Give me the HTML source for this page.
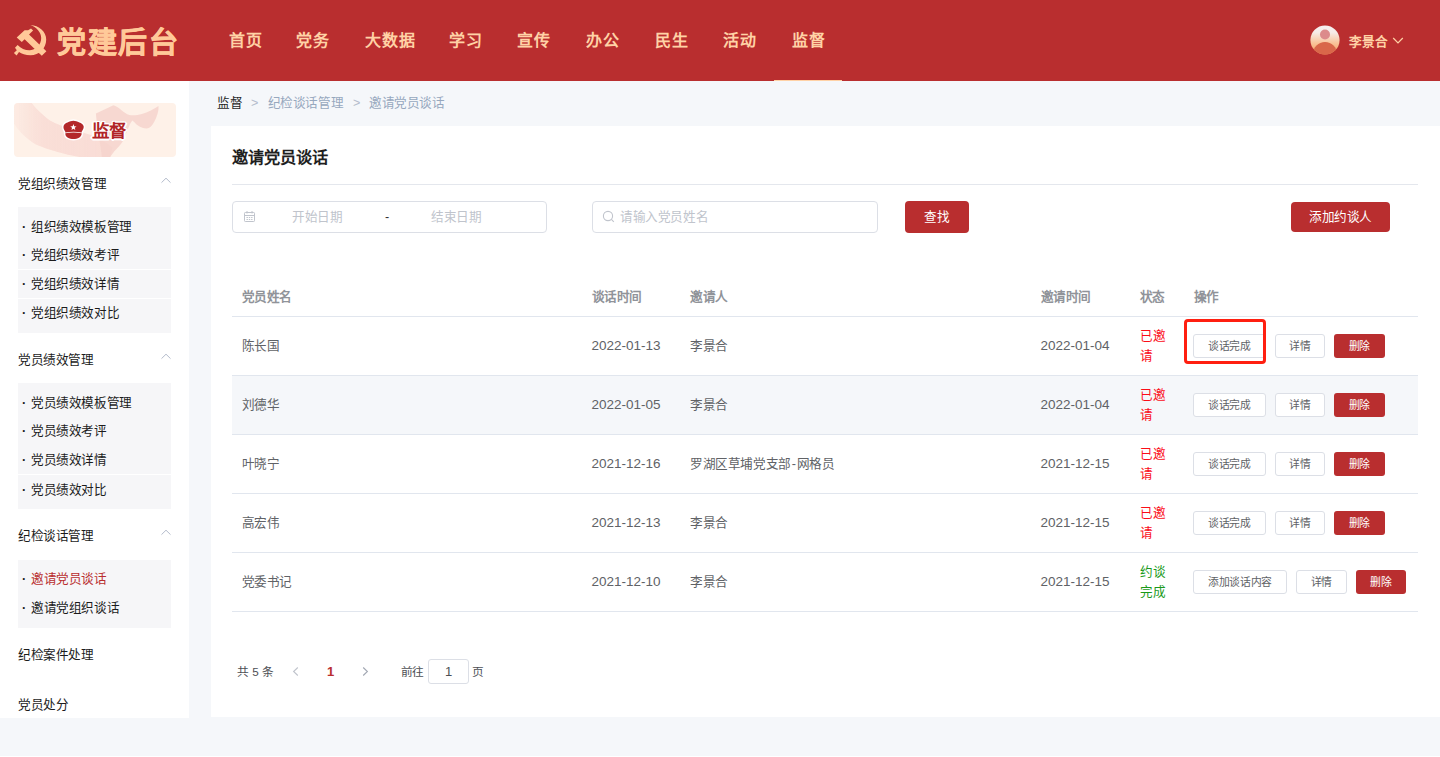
<!DOCTYPE html>
<html lang="zh-CN">
<head>
<meta charset="utf-8">
<title>党建后台 - 邀请党员谈话</title>
<style>
*{box-sizing:border-box;margin:0;padding:0}
html,body{width:1440px;height:757px;overflow:hidden}
body{position:relative;background:#f5f7fa;font-family:"Liberation Sans",sans-serif;font-size:12.6px;letter-spacing:-0.4px;color:#303133;line-height:1}
.a{position:absolute;white-space:nowrap}
#hd{position:absolute;left:0;top:0;width:1440px;height:81px;background:#b92e2f}
#logo{position:absolute;left:8px;top:18px;width:50px;height:44px}
#brand{position:absolute;left:57px;top:22.5px;height:40px;line-height:40px;font-size:29px;font-weight:bold;color:#ffc999;letter-spacing:1.5px;-webkit-text-stroke:0.5px #ffc999;white-space:nowrap}
.nav{position:absolute;top:0;height:81px;line-height:81px;font-size:16px;letter-spacing:1px;text-indent:0.5px;font-weight:bold;color:#ffd2a6;text-align:center;white-space:nowrap}
.nav.on{color:#ffd2a6}
#avatar{position:absolute;left:1310.2px;top:25.2px;width:30px;height:30px}
#uname{position:absolute;left:1349px;top:31.5px;height:20px;line-height:20px;font-size:12.6px;letter-spacing:0;font-weight:bold;color:#ffd2a6;white-space:nowrap}
#uarrow{position:absolute;left:1392px;top:36px;width:12px;height:9px}
#sb{position:absolute;left:0;top:81px;width:189px;height:637px;background:#fff}
#banner{position:absolute;left:14px;top:103px;width:162px;height:54px;border-radius:4px;overflow:hidden;background:#fef1e8}
#banner svg{position:absolute;left:0;top:0;width:162px;height:54px}
#bicon{position:absolute;left:61px;top:118px;width:25px;height:24px}
#btext{position:absolute;left:91.5px;top:119px;height:24px;line-height:24px;font-size:17.5px;letter-spacing:0.6px;font-weight:bold;color:#b12426;white-space:nowrap;text-shadow:0 0 1px #fff,1px 1px 0 #fff,-1px -1px 0 #fff,1px -1px 0 #fff,-1px 1px 0 #fff,0 1.5px 0 #fff,0 -1.5px 0 #fff,1.5px 0 0 #fff,-1.5px 0 0 #fff}
.mt{position:absolute;left:18px;height:20px;line-height:20px;font-size:12.6px;color:#1c1c1c;white-space:nowrap}
.chev{position:absolute;left:159.5px;width:12px;height:7px}
.sub{position:absolute;left:18px;width:153px;background:#f6f6f8}
.si{position:absolute;left:22px;height:20px;line-height:20px;font-size:12.6px;color:#1c1c1c;white-space:nowrap}
.si i{font-style:normal;font-weight:bold;display:inline-block;width:9px}
.si.on{color:#b92e2f}
.si.on i{color:#1c1c1c}
.wl{position:absolute;left:18px;width:153px;height:1px;background:#fff}
#panel{position:absolute;left:211px;top:126px;width:1229px;height:591px;background:#fff}
.bc{position:absolute;top:93px;height:20px;line-height:20px;font-size:12.6px;white-space:nowrap;color:#97a8be}
#ttl{position:absolute;left:232px;top:144.5px;height:24px;line-height:24px;font-size:16.2px;letter-spacing:0;font-weight:bold;color:#1f1f1f;white-space:nowrap}
.hl{position:absolute;left:232px;width:1186px;height:1px;background:#e4e7ed}
.inp{position:absolute;top:201px;height:32px;border:1px solid #dcdfe6;border-radius:4px;background:#fff}
.ph{position:absolute;top:207px;height:20px;line-height:20px;font-size:12.6px;color:#c0c4cc;white-space:nowrap}
.rbtn{position:absolute;background:#b92e2f;color:#fff;border-radius:4px;text-align:center;white-space:nowrap}
.th{position:absolute;top:287px;height:20px;line-height:20px;font-size:12.6px;font-weight:bold;color:#909399;white-space:nowrap}
.row{position:absolute;left:232px;width:1186px;height:59px;border-bottom:1px solid #e1e6ee}
.row.s{background:#f5f7fa}
.td{position:absolute;height:20px;line-height:20px;font-size:12.6px;color:#606266;white-space:nowrap}
.dt{font-size:13.5px;letter-spacing:0}
.st{position:absolute;left:1140px;width:40px;line-height:20px;font-size:12.6px;white-space:nowrap}
.wb{position:absolute;height:24px;line-height:22px;border:1px solid #dcdfe6;border-radius:3px;background:#fff;color:#606266;font-size:10.8px;text-align:center;white-space:nowrap}
.db{position:absolute;height:24px;line-height:24px;border-radius:3px;background:#b92e2f;color:#fff;font-size:10.8px;text-align:center;white-space:nowrap}
#mark{position:absolute;left:1184px;top:319px;width:82px;height:45px;border:3px solid #ff1f10;border-radius:4px}
.pg{position:absolute;top:662px;height:20px;line-height:20px;font-size:11.7px;color:#4d4f55;white-space:nowrap}
</style>
</head>
<body>
<header id="hd">
<svg id="logo" viewBox="0 0 50 44"><g fill="#ffc999">
<path d="M8.7 19.5 L16.6 12.2 L20.1 12.3 L23 10.5 L25.1 12.5 L21 16.6 L38.4 33.3 L33.8 37.7 L16.6 21.2 L13.8 24 Z"/>
<path d="M22.4 7 C31 7.5 38.2 13.5 38.2 21.5 C38.2 30.5 31 37.3 22.5 37.3 C17.5 37.3 13.5 35.8 11 34 L8.6 37.6 L5.9 35 L8.8 32.3 L7 29.7 L9.6 26.9 C13 30.5 17.5 32.4 22 32.2 C28.5 31.8 33.2 26.5 33.2 20 C33.2 14.5 29 9.5 22.4 7 Z"/>
</g></svg>
<div id="brand">党建后台</div>
<div class="nav" style="left:211.3px;width:68px">首页</div>
<div class="nav" style="left:279.0px;width:68px">党务</div>
<div class="nav" style="left:347.3px;width:85px">大数据</div>
<div class="nav" style="left:432.0px;width:68px">学习</div>
<div class="nav" style="left:500.0px;width:68px">宣传</div>
<div class="nav" style="left:569.0px;width:68px">办公</div>
<div class="nav" style="left:637.5px;width:68px">民生</div>
<div class="nav" style="left:705.4px;width:68px">活动</div>
<div class="nav on" style="left:774.6px;width:68px">监督</div>
<div class="a" style="left:774px;top:80px;width:68px;height:1px;background:#ffd2a6"></div>
<svg id="avatar" viewBox="0 0 30 30"><defs><linearGradient id="ag" x1="0" y1="0" x2="0" y2="1"><stop offset="0" stop-color="#f6f1f1"/><stop offset="0.25" stop-color="#f6ebe6"/><stop offset="0.6" stop-color="#f9c49a"/><stop offset="1" stop-color="#f39a5c"/></linearGradient><clipPath id="ac"><circle cx="15" cy="15" r="14.6"/></clipPath></defs>
<circle cx="15" cy="15" r="14.6" fill="url(#ag)"/><g clip-path="url(#ac)"><circle cx="15" cy="9.5" r="5" fill="#dc8b8b"/><ellipse cx="15" cy="29" rx="12" ry="12" fill="#d9674a"/></g></svg>
<div id="uname">李景合</div>
<svg id="uarrow" viewBox="0 0 12 9"><path d="M1.2 2 L6 6.8 L10.8 2" fill="none" stroke="#ffd2a6" stroke-width="1.2"/></svg>
</header>
<aside>
<div id="sb"></div>
<div id="banner"><svg viewBox="0 0 162 54"><defs><filter id="bl" x="-10%" y="-10%" width="120%" height="120%"><feGaussianBlur stdDeviation="0.4"/></filter><linearGradient id="rg" x1="0" y1="0" x2="1" y2="0"><stop offset="0" stop-color="#f9dcd5" stop-opacity="0.25"/><stop offset="0.3" stop-color="#f9dcd5" stop-opacity="0.9"/><stop offset="1" stop-color="#f9ddd6"/></linearGradient></defs>
<path d="M0 0 L17.8 0 C22 6 30 13 36 17.6 C42 21 50 24 60 27 C72 30 88 35 98.7 44.6 L96 54 L65.4 54 C50 51 35 47 21.8 41.4 C12 36 5 28 0 20.8 Z" fill="url(#rg)" filter="url(#bl)"/>
<path d="M81.9 10.5 L99.4 2.2 C102 3 104 4.5 105.7 5.7 C109 8.5 112 11 115.2 12 C119.5 12.8 124 12 127.9 10.9 C134 9 140 6 144.5 2.9 C144.8 6 144 9.5 142.9 12.8 C141.5 17 139.5 20.5 137.4 23.1 C136 24.5 134.5 25.3 132.6 25.5 C129.5 25.5 127 24.5 124.7 23.1 C122 21.5 120.5 19 118.4 17.6 C117 19 116 21 115.2 23.1 C113 28 111 33 108.9 38.2 C106 42.5 103 45.5 100.1 48.5 L96.2 54 L88 54 L82.7 19.2 Z" fill="#f6d4cd" opacity="0.85" filter="url(#bl)"/>
</svg></div>
<svg id="bicon" viewBox="0 0 25 24"><path d="M2.5 8.5 C2.8 6.5 4.5 5.2 6.5 4.6 C8.5 3.5 10.5 2.8 12.4 2.8 C14.3 2.8 16.3 3.5 18.4 4.6 C20.4 5.2 22.2 6.5 22.7 8.5 C22.9 10.5 21.6 12.3 20.7 13.7 L20.7 15.4 C20.6 17.5 19.7 18.6 18.4 19.4 C16.5 20.6 14.5 21 12.4 21 C10.4 21 8.4 20.6 6.5 19.4 C5.2 18.6 4.4 17.5 4.3 15.4 L4.3 13.7 C3.4 12.3 2.2 10.5 2.5 8.5 Z" fill="#fff" stroke="#fff" stroke-width="3" stroke-linejoin="round"/>
<path d="M2.5 8.5 C2.8 6.5 4.5 5.2 6.5 4.6 C8.5 3.5 10.5 2.8 12.4 2.8 C14.3 2.8 16.3 3.5 18.4 4.6 C20.4 5.2 22.2 6.5 22.7 8.5 C22.9 10.5 21.6 12.3 20.7 13.7 L20.7 14.55 C15.5 13.55 9.5 13.55 4.3 14.55 L4.3 13.7 C3.4 12.3 2.2 10.5 2.5 8.5 Z" fill="#b3282a"/>
<path d="M4.3 15.3 C9.5 14.3 15.5 14.3 20.7 15.3 C20.6 17.5 19.7 18.6 18.4 19.4 C16.5 20.6 14.5 21 12.4 21 C10.4 21 8.4 20.6 6.5 19.4 C5.2 18.6 4.4 17.5 4.3 15.4 Z" fill="#b3282a"/>
<path d="M12.40 6.10 L13.22 8.27 L15.54 8.38 L13.73 9.83 L14.34 12.07 L12.40 10.80 L10.46 12.07 L11.07 9.83 L9.26 8.38 L11.58 8.27 Z" fill="#fff"/></svg>
<div id="btext">监督</div>
<div class="mt" style="top:174px">党组织绩效管理</div>
<svg class="chev" style="top:176.5px" viewBox="0 0 12 7"><path d="M1.5 5.6 L6 1.2 L10.5 5.6" fill="none" stroke="#b4bccc" stroke-width="1"/></svg>
<div class="sub" style="top:207px;height:126px"></div>
<div class="wl" style="top:269px"></div>
<div class="wl" style="top:298px"></div>
<div class="si" style="top:217.0px"><i>·</i>组织绩效模板管理</div>
<div class="si" style="top:245.0px"><i>·</i>党组织绩效考评</div>
<div class="si" style="top:274.0px"><i>·</i>党组织绩效详情</div>
<div class="si" style="top:303.0px"><i>·</i>党组织绩效对比</div>
<div class="mt" style="top:350px">党员绩效管理</div>
<svg class="chev" style="top:352.5px" viewBox="0 0 12 7"><path d="M1.5 5.6 L6 1.2 L10.5 5.6" fill="none" stroke="#b4bccc" stroke-width="1"/></svg>
<div class="sub" style="top:383px;height:126px"></div>
<div class="wl" style="top:474px"></div>
<div class="si" style="top:393.0px"><i>·</i>党员绩效模板管理</div>
<div class="si" style="top:421.0px"><i>·</i>党员绩效考评</div>
<div class="si" style="top:450.0px"><i>·</i>党员绩效详情</div>
<div class="si" style="top:479.5px"><i>·</i>党员绩效对比</div>
<div class="mt" style="top:526px">纪检谈话管理</div>
<svg class="chev" style="top:528.5px" viewBox="0 0 12 7"><path d="M1.5 5.6 L6 1.2 L10.5 5.6" fill="none" stroke="#b4bccc" stroke-width="1"/></svg>
<div class="sub" style="top:560px;height:68px"></div>
<div class="si on" style="top:569.0px"><i>·</i>邀请党员谈话</div>
<div class="si" style="top:598.0px"><i>·</i>邀请党组织谈话</div>
<div class="mt" style="top:645px">纪检案件处理</div>
<div class="mt" style="top:695px">党员处分</div>
</aside>
<main>
<div id="panel"></div>
<div class="bc" style="left:217px;color:#1f1f1f">监督</div>
<div class="bc" style="left:251px;color:#b4bccc">&gt;</div>
<div class="bc" style="left:267.5px">纪检谈话管理</div>
<div class="bc" style="left:353px;color:#b4bccc">&gt;</div>
<div class="bc" style="left:369px">邀请党员谈话</div>
<div id="ttl">邀请党员谈话</div>
<div class="hl" style="top:184px"></div>
<div class="inp" style="left:232px;width:315px"></div>
<svg class="a" style="left:243px;top:210px;width:13px;height:13px" viewBox="0 0 13 13"><g fill="none" stroke="#c0c4cc" stroke-width="1"><rect x="1.5" y="2.5" width="10" height="9" rx="0.8"/><path d="M1.5 5.5H11.5M4 1V3.5M9 1V3.5"/></g><g fill="#c0c4cc"><rect x="3.5" y="7" width="1.4" height="1"/><rect x="5.8" y="7" width="1.4" height="1"/><rect x="8.1" y="7" width="1.4" height="1"/><rect x="3.5" y="9" width="1.4" height="1"/><rect x="5.8" y="9" width="1.4" height="1"/><rect x="8.1" y="9" width="1.4" height="1"/></g></svg>
<div class="ph" style="left:292px">开始日期</div>
<div class="ph" style="left:385px;color:#303133">-</div>
<div class="ph" style="left:431px">结束日期</div>
<div class="inp" style="left:592px;width:286px"></div>
<svg class="a" style="left:602px;top:210px;width:13px;height:13px" viewBox="0 0 13 13"><g fill="none" stroke="#c0c4cc" stroke-width="1.1"><circle cx="6" cy="6" r="4.6"/><path d="M9.4 9.4 L11.8 11.8"/></g></svg>
<div class="ph" style="left:620px">请输入党员姓名</div>
<div class="rbtn" style="left:905px;top:201px;width:64px;height:32px;line-height:32px;font-size:12.6px;font-weight:500">查找</div>
<div class="rbtn" style="left:1291px;top:202px;width:99px;height:30px;line-height:30px;font-size:12.6px">添加约谈人</div>
<div class="th" style="left:241.5px">党员姓名</div>
<div class="th" style="left:591.5px">谈话时间</div>
<div class="th" style="left:690.0px">邀请人</div>
<div class="th" style="left:1040.5px">邀请时间</div>
<div class="th" style="left:1139.5px">状态</div>
<div class="th" style="left:1193.5px">操作</div>
<div class="hl" style="top:316px;background:#e1e6ee"></div>
<div class="row" style="top:317px"></div>
<div class="td" style="left:241.5px;top:336px">陈长国</div>
<div class="td dt" style="left:591.5px;top:336px">2022-01-13</div>
<div class="td" style="left:690px;top:336px">李景合</div>
<div class="td dt" style="left:1040.5px;top:336px">2022-01-04</div>
<div class="st" style="top:326px;color:#fb0d18">已邀<br>请</div>
<div class="wb" style="left:1193px;top:334px;width:73px">谈话完成</div>
<div class="wb" style="left:1275px;top:334px;width:50px">详情</div>
<div class="db" style="left:1334px;top:334px;width:51px">删除</div>
<div class="row s" style="top:376px"></div>
<div class="td" style="left:241.5px;top:395px">刘德华</div>
<div class="td dt" style="left:591.5px;top:395px">2022-01-05</div>
<div class="td" style="left:690px;top:395px">李景合</div>
<div class="td dt" style="left:1040.5px;top:395px">2022-01-04</div>
<div class="st" style="top:385px;color:#fb0d18">已邀<br>请</div>
<div class="wb" style="left:1193px;top:393px;width:73px">谈话完成</div>
<div class="wb" style="left:1275px;top:393px;width:50px">详情</div>
<div class="db" style="left:1334px;top:393px;width:51px">删除</div>
<div class="row" style="top:435px"></div>
<div class="td" style="left:241.5px;top:454px">叶晓宁</div>
<div class="td dt" style="left:591.5px;top:454px">2021-12-16</div>
<div class="td" style="left:690px;top:454px">罗湖区草埔党支部<span style="margin:0 1px">-</span>网格员</div>
<div class="td dt" style="left:1040.5px;top:454px">2021-12-15</div>
<div class="st" style="top:444px;color:#fb0d18">已邀<br>请</div>
<div class="wb" style="left:1193px;top:452px;width:73px">谈话完成</div>
<div class="wb" style="left:1275px;top:452px;width:50px">详情</div>
<div class="db" style="left:1334px;top:452px;width:51px">删除</div>
<div class="row" style="top:494px"></div>
<div class="td" style="left:241.5px;top:513px">高宏伟</div>
<div class="td dt" style="left:591.5px;top:513px">2021-12-13</div>
<div class="td" style="left:690px;top:513px">李景合</div>
<div class="td dt" style="left:1040.5px;top:513px">2021-12-15</div>
<div class="st" style="top:503px;color:#fb0d18">已邀<br>请</div>
<div class="wb" style="left:1193px;top:511px;width:73px">谈话完成</div>
<div class="wb" style="left:1275px;top:511px;width:50px">详情</div>
<div class="db" style="left:1334px;top:511px;width:51px">删除</div>
<div class="row" style="top:553px"></div>
<div class="td" style="left:241.5px;top:572px">党委书记</div>
<div class="td dt" style="left:591.5px;top:572px">2021-12-10</div>
<div class="td" style="left:690px;top:572px">李景合</div>
<div class="td dt" style="left:1040.5px;top:572px">2021-12-15</div>
<div class="st" style="top:562px;color:#1a9a1a">约谈<br>完成</div>
<div class="wb" style="left:1193px;top:570px;width:94px">添加谈话内容</div>
<div class="wb" style="left:1296px;top:570px;width:51px">详情</div>
<div class="db" style="left:1356px;top:570px;width:50px">删除</div>
<div id="mark"></div>
<div class="pg" style="left:236.5px;word-spacing:1.3px">共 5 条</div>
<svg class="a" style="left:291px;top:666px;width:9px;height:11px" viewBox="0 0 9 11"><path d="M6.8 1.5 L2.6 5.5 L6.8 9.5" fill="none" stroke="#c0c4cc" stroke-width="1.1"/></svg>
<div class="pg" style="left:327px;color:#b92e2f;font-weight:bold;font-size:13px">1</div>
<svg class="a" style="left:361px;top:666px;width:9px;height:11px" viewBox="0 0 9 11"><path d="M2.2 1.5 L6.4 5.5 L2.2 9.5" fill="none" stroke="#a2a8b3" stroke-width="1.1"/></svg>
<div class="pg" style="left:400.5px">前往</div>
<div class="a" style="left:428px;top:659px;width:41px;height:25px;border:1px solid #dcdfe6;border-radius:3px;background:#fff"></div>
<div class="pg" style="left:428px;width:41px;text-align:center;font-size:13px">1</div>
<div class="pg" style="left:472px">页</div>
</main>
<div class="a" style="left:0;top:756px;width:1440px;height:1px;background:#fff"></div>
</body>
</html>
